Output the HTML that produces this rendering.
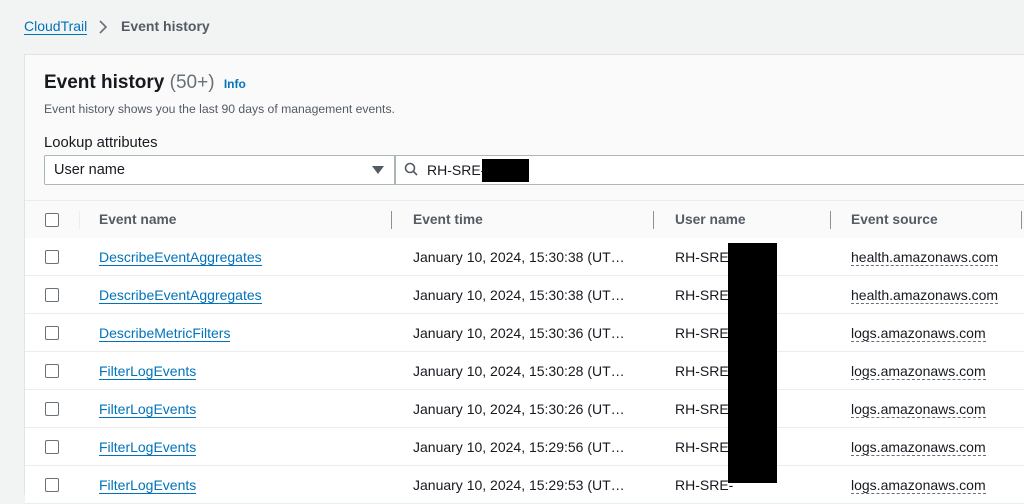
<!DOCTYPE html>
<html><head><style>
body{margin:0;width:1024px;height:482px;overflow:hidden;background:#f2f3f3;font-family:"Liberation Sans",sans-serif;position:relative;color:#16191f}
.a{position:absolute;white-space:nowrap}
.card{position:absolute;left:24px;top:54px;width:1010px;height:440px;background:#fafafa;border-left:1px solid #e3e3e3;border-top:1px solid #e3e3e3}
.row{position:absolute;left:25px;width:1000px;height:37px;background:#fff;border-bottom:1px solid #eaeded}
.cb{position:absolute;left:20px;top:12px;width:12px;height:12px;border:1.5px solid #687078;border-radius:2px;background:#fff}
.lk{color:#0073bb;border-bottom:1px solid #0073bb}
.dt{border-bottom:1px dashed #687078}
.sep{position:absolute;top:10px;width:1px;height:18px;background:#879596}
.t{font-size:14px;top:11px}
</style></head><body>
<div class="a" style="left:24px;top:18px;font-size:14px;color:#0073bb;border-bottom:1px solid #0073bb">CloudTrail</div>
<svg class="a" style="left:98px;top:20px" width="10" height="14"><path d="M2 1l6 6-6 6" stroke="#687078" stroke-width="1.6" fill="none"/></svg>
<div class="a" style="left:121px;top:18px;font-size:14px;font-weight:bold;color:#545b64">Event history</div>
<div class="card"></div>
<div class="a" style="left:44px;top:72px;font-size:19px;font-weight:bold">Event history <span style="font-weight:normal;color:#687078">(50+)</span> <span style="font-size:12px;color:#0073bb;font-weight:bold;margin-left:4px">Info</span></div>
<div class="a" style="left:44px;top:102px;font-size:12.2px;color:#545b64">Event history shows you the last 90 days of management events.</div>
<div class="a" style="left:44px;top:135px;font-size:14.8px">Lookup attributes</div>
<div class="a" style="left:44px;top:155px;width:349px;height:28px;background:#fff;border:1px solid #aab7b8;border-radius:2px 0 0 2px"></div>
<div class="a" style="left:54px;top:162px;font-size:14.5px">User name</div>
<svg class="a" style="left:372px;top:166px" width="12" height="8"><path d="M0 0h12L6 8z" fill="#545b64"/></svg>
<div class="a" style="left:395px;top:155px;width:640px;height:28px;background:#fff;border:1px solid #aab7b8"></div>
<svg class="a" style="left:404px;top:162px" width="14" height="14"><circle cx="6" cy="6" r="4.5" stroke="#545b64" stroke-width="1.6" fill="none"/><path d="M9.5 9.5l3.5 3.5" stroke="#545b64" stroke-width="1.6"/></svg>
<div class="a" style="left:427px;top:162px;font-size:14px">RH-SRE-</div>
<div class="a" style="left:482px;top:159px;width:47px;height:23px;background:#000"></div>
<div class="a" style="left:25px;top:200px;width:1000px;height:37px;background:#fafafa;border-top:1px solid #eaeded;border-bottom:1px solid #eaeded">
<div class="cb"></div>
<div class="sep" style="left:54px;background:#eaeded"></div>
<div class="a t" style="left:74px;font-size:13.8px;font-weight:bold;color:#545b64">Event name</div>
<div class="sep" style="left:366px"></div>
<div class="a t" style="left:388px;font-size:13.8px;font-weight:bold;color:#545b64">Event time</div>
<div class="sep" style="left:628px"></div>
<div class="a t" style="left:650px;font-size:13.8px;font-weight:bold;color:#545b64">User name</div>
<div class="sep" style="left:805px"></div>
<div class="a t" style="left:826px;font-size:13.8px;font-weight:bold;color:#545b64">Event source</div>
<div class="sep" style="left:996px"></div>
</div>
<div id="rows"></div>
<script>
var d=[["DescribeEventAggregates","15:30:38","health.amazonaws.com"],["DescribeEventAggregates","15:30:38","health.amazonaws.com"],["DescribeMetricFilters","15:30:36","logs.amazonaws.com"],["FilterLogEvents","15:30:28","logs.amazonaws.com"],["FilterLogEvents","15:30:26","logs.amazonaws.com"],["FilterLogEvents","15:29:56","logs.amazonaws.com"],["FilterLogEvents","15:29:53","logs.amazonaws.com"]];
var h="";d.forEach(function(r,i){var t=238+i*38;h+='<div class="row" style="top:'+t+'px"><div class="cb"></div><div class="a t" style="left:74px"><span class="lk">'+r[0]+'</span></div><div class="a t" style="left:388px">January 10, 2024, '+r[1]+' (UT…</div><div class="a t" style="left:650px">RH-SRE-</div><div class="a t" style="left:826px"><span class="dt">'+r[2]+'</span></div></div>';});
document.getElementById("rows").innerHTML=h+'<div class="a" style="left:728px;top:243px;width:49px;height:240px;background:#000"></div>';
</script>
</body></html>
